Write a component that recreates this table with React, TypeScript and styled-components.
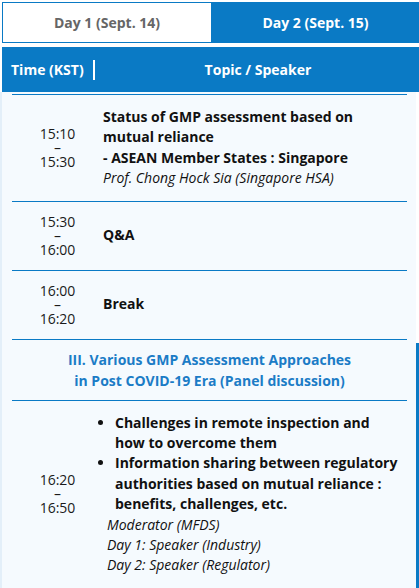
import React from "react";
import styled, { createGlobalStyle } from "styled-components";

const BLUE = "#0a7ac5";

const GlobalStyle = createGlobalStyle`
  html, body {
    margin: 0;
    padding: 0;
    background: #ffffff;
    font-family: "Open Sans", "Noto Sans", sans-serif;
  }
`;

interface Session {
  start: string;
  end: string;
  title?: string[];
  bullets?: string[];
  speakers?: string[];
}

const sessions: Session[] = [
  {
    start: "15:10",
    end: "15:30",
    title: [
      "Status of GMP assessment based on mutual reliance",
      "- ASEAN Member States : Singapore",
    ],
    speakers: ["Prof. Chong Hock Sia (Singapore HSA)"],
  },
  { start: "15:30", end: "16:00", title: ["Q&A"] },
  { start: "16:00", end: "16:20", title: ["Break"] },
];

const panel: Session = {
  start: "16:20",
  end: "16:50",
  bullets: [
    "Challenges in remote inspection and how to overcome them",
    "Information sharing between regulatory authorities based on mutual reliance : benefits, challenges, etc.",
  ],
  speakers: [
    "Moderator (MFDS)",
    "Day 1: Speaker (Industry)",
    "Day 2: Speaker (Regulator)",
  ],
};

const App = () => {
  const renderRow = (s: Session, indent = false) => (
    <Row key={s.start}>
      <TimeCell>
        <span>{s.start}</span>
        <span>–</span>
        <span>{s.end}</span>
      </TimeCell>
      <TopicCell>
        {s.title?.map((t) => (
          <Title key={t}>{t}</Title>
        ))}
        {s.bullets && (
          <BulletList>
            {s.bullets.map((b) => (
              <li key={b}>{b}</li>
            ))}
          </BulletList>
        )}
        {s.speakers?.map((sp) => (
          <Speaker key={sp} $indent={indent}>
            {sp}
          </Speaker>
        ))}
      </TopicCell>
    </Row>
  );

  return (
    <Page>
      <GlobalStyle />
      <Tabs>
        <Tab>Day 1 (Sept. 14)</Tab>
        <Tab $active>Day 2 (Sept. 15)</Tab>
      </Tabs>
      <HeaderBar>
        <HeaderTime>Time (KST)</HeaderTime>
        <HeaderTopic>Topic / Speaker</HeaderTopic>
      </HeaderBar>
      <Body>
        {sessions.map((s) => renderRow(s))}
        <SectionRow>
          III. Various GMP Assessment Approaches
          <br />
          in Post COVID-19 Era (Panel discussion)
        </SectionRow>
        {renderRow(panel, true)}
      </Body>
      <RightRail />
    </Page>
  );
};

export default App;

const Page = styled.div`
  position: relative;
  width: 417px;
  padding: 2px 0 0 2px;
  height: 586px;
  overflow: hidden;
`;

const Tabs = styled.div`
  display: grid;
  grid-template-columns: 210px 207px;
  height: 41px;
`;

const Tab = styled.div<{ $active?: boolean }>`
  display: flex;
  align-items: center;
  justify-content: center;
  box-sizing: border-box;
  border: 1px solid ${BLUE};
  background: ${(p) => (p.$active ? BLUE : "#ffffff")};
  color: ${(p) => (p.$active ? "#ffffff" : "#666666")};
  font-weight: 700;
  font-size: 14px;
`;

const HeaderBar = styled.div`
  display: flex;
  align-items: center;
  height: 45px;
  margin-top: 4px;
  background: ${BLUE};
  color: #ffffff;
  font-weight: 700;
  font-size: 14px;
`;

const HeaderTime = styled.div`
  width: 93px;
  box-sizing: border-box;
  padding-left: 9px;
  border-right: 2px solid #ffffff;
  line-height: 20px;
`;

const HeaderTopic = styled.div`
  flex: 1;
  text-align: center;
  padding-left: 2px;
`;

const Body = styled.div`
  margin-left: -2px;
  margin-right: 3px;
  border-left: 2px solid #e3eff9;
  background: #f5fafe;
  padding: 2px 9px 0 10px;
`;

const Row = styled.div`
  display: grid;
  grid-template-columns: 91px 1fr;
  align-items: center;
  border-top: 1px solid ${BLUE};
  padding: 12px 0 12px;
  min-height: 44px;
`;

const TimeCell = styled.div`
  display: flex;
  flex-direction: column;
  align-items: center;
  font-size: 14px;
  line-height: 14px;
  color: #1a1a1a;
`;

const TopicCell = styled.div`
  font-size: 14px;
  line-height: 20.4px;
  color: #111111;
`;

const Title = styled.div`
  font-weight: 700;
`;

const BulletList = styled.ul`
  margin: 0;
  padding: 0 8px 0 12px;
  font-weight: 700;
`;

const Speaker = styled.div<{ $indent?: boolean }>`
  font-style: italic;
  margin-left: ${(p) => (p.$indent ? "4px" : "0")};
`;

const SectionRow = styled.div`
  border-top: 1px solid ${BLUE};
  padding: 9px 0 9px;
  text-align: center;
  font-size: 14px;
  line-height: 21px;
  font-weight: 700;
  color: #1b7cc6;
`;

const RightRail = styled.div`
  position: absolute;
  right: 0;
  top: 343px;
  bottom: 0;
  width: 3px;
  background: ${BLUE};
`;
